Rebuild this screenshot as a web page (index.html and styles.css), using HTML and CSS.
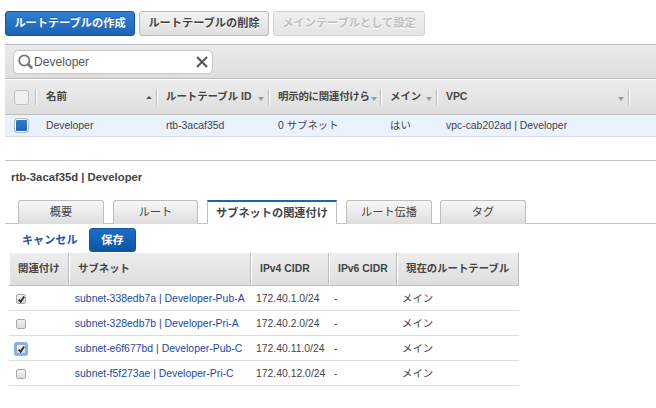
FILE: index.html
```html
<!DOCTYPE html>
<html lang="ja">
<head>
<meta charset="utf-8">
<title>ルートテーブル</title>
<link rel="stylesheet" href="styles.css">
</head>
<body>
<div class="toolbar">
  <button class="btn primary">ルートテーブルの作成</button>
  <button class="btn">ルートテーブルの削除</button>
  <button class="btn disabled wide" disabled>メインテーブルとして設定</button>
</div>
<div class="filter">
  <div class="search">
    <svg class="glass" width="16" height="16" viewBox="0 0 16 16"><circle cx="6.3" cy="6.5" r="5.1" fill="none" stroke="#777" stroke-width="1.8"/><path d="M10.4 10.6L13.4 13.6" stroke="#777" stroke-width="2.8" stroke-linecap="round"/></svg>
    <span class="query">Developer</span>
    <svg class="clear" width="12" height="12" viewBox="0 0 12 12"><path d="M1 1L11 11M11 1L1 11" stroke="#555" stroke-width="2"/></svg>
  </div>
</div>
<div class="grid head">
  <div class="pick"><span class="box"></span></div>
  <div class="col"><span>名前</span><i class="up"></i></div>
  <div class="col"><span>ルートテーブル ID</span><i class="down"></i></div>
  <div class="col tight"><span>明示的に関連付けら</span><i class="down"></i></div>
  <div class="col"><span>メイン</span><i class="down"></i></div>
  <div class="col"><span>VPC</span><i class="down"></i></div>
</div>
<div class="grid record">
  <div class="pick"><span class="box on"></span></div>
  <div class="col">Developer</div>
  <div class="col">rtb-3acaf35d</div>
  <div class="col">0 サブネット</div>
  <div class="col">はい</div>
  <div class="col">vpc-cab202ad | Developer</div>
</div>
<h1 class="title">rtb-3acaf35d | Developer</h1>
<div class="tabs">
  <div class="tab">概要</div>
  <div class="tab t2">ルート</div>
  <div class="tab active">サブネットの関連付け</div>
  <div class="tab t4">ルート伝播</div>
  <div class="tab">タグ</div>
</div>
<div class="actions">
  <a class="cancel">キャンセル</a>
  <button class="btn primary save">保存</button>
</div>
<table class="subnets">
  <colgroup><col class="c1"><col class="c2"><col class="c3"><col class="c4"><col class="c5"></colgroup>
  <thead>
    <tr><th>関連付け</th><th>サブネット</th><th>IPv4 CIDR</th><th>IPv6 CIDR</th><th>現在のルートテーブル</th></tr>
  </thead>
  <tbody>
    <tr><td><span class="check"><svg width="9" height="9" viewBox="0 0 9 9"><path d="M1.7 4.6L3.6 6.7L7.1 1.6" fill="none" stroke="#333" stroke-width="1.9"/></svg></span></td><td><a>subnet-338edb7a | Developer-Pub-A</a></td><td>172.40.1.0/24</td><td>-</td><td>メイン</td></tr>
    <tr><td><span class="check"></span></td><td><a>subnet-328edb7b | Developer-Pri-A</a></td><td>172.40.2.0/24</td><td>-</td><td>メイン</td></tr>
    <tr><td><span class="check focus"><svg width="9" height="9" viewBox="0 0 9 9"><path d="M1.7 4.6L3.6 6.7L7.1 1.6" fill="none" stroke="#333" stroke-width="1.9"/></svg></span></td><td><a>subnet-e6f677bd | Developer-Pub-C</a></td><td>172.40.11.0/24</td><td>-</td><td>メイン</td></tr>
    <tr><td><span class="check"></span></td><td><a>subnet-f5f273ae | Developer-Pri-C</a></td><td>172.40.12.0/24</td><td>-</td><td>メイン</td></tr>
  </tbody>
</table>
</body>
</html>
```
FILE: styles.css
```css
* { box-sizing: border-box; }
body {
  margin: 0;
  padding: 11px 0 0 5px;
  height: 408px;
  overflow: hidden;
  background: #fff;
  color: #444;
  font: 10.4px/14px "Liberation Sans", "Noto Sans CJK JP", sans-serif;
}
.toolbar { display: flex; gap: 4px; height: 33px; }
.btn {
  width: 130px;
  height: 25px;
  padding: 0 0 1px;
  border: 1px solid #bbb;
  border-radius: 3px;
  background: linear-gradient(#f4f4f4, #dedede);
  color: #444;
  font: bold 11.2px/20px "Liberation Sans", "Noto Sans CJK JP", sans-serif;
  white-space: nowrap;
  text-shadow: 0 1px 0 #fff;
}
.wide { width: 152px; }
.disabled { border-color: #d3d3d3; background: linear-gradient(#f0f0f0, #e4e4e4); color: #bebebe; }
.primary {
  border-color: #1256a0;
  background: linear-gradient(#3080d4, #1b63b4);
  color: #fff;
  text-shadow: 0 -1px 0 #1a5ba6;
}
.filter {
  height: 35px;
  padding: 5px 8px;
  border-top: 1px solid #bebebe;
  border-bottom: 1px solid #bebebe;
  background: linear-gradient(#ebebeb, #dedede);
}
.search {
  display: flex;
  align-items: center;
  width: 200px;
  height: 24px;
  padding: 0 4px 0 4px;
  border: 1px solid #c6c6c6;
  border-radius: 5px;
  background: #fff;
}
.query { font-size: 12.1px; color: #555; }
.clear { margin-left: auto; }
.grid { display: grid; grid-template-columns: 31px 121px 112px 112px 56px 192px 1fr; align-items: center; white-space: nowrap; }
.head {
  height: 36px;
  border-top: 1px solid #fff;
  border-bottom: 1px solid #bebebe;
  background: linear-gradient(#ececec, #dedede);
  font-weight: bold;
}
.record { height: 22px; border-bottom: 1px solid #d8dde3; background: #e9f2fe; }
.col { display: flex; align-items: center; padding-left: 9px; }
.col:nth-child(2) { padding-left: 10px; }
.head .col, .head .pick { height: 16px; border-right: 1px solid #bbb; box-shadow: 1px 0 #fff; }
.head .col { padding-right: 4px; }
.head .tight { padding-right: 3px; letter-spacing: -0.2px; }
.pick { display: flex; align-items: center; padding-left: 9px; }
.box { width: 15px; height: 15px; border: 1px solid #c2c2c2; border-radius: 3px; background: #f0f0f0; }
.box.on { border-color: #bbb; background: linear-gradient(#327fd0, #1b65b6); box-shadow: inset 0 0 0 1px #fff; }
i { margin-left: auto; border: 3px solid transparent; }
.up { border-top: 0; border-bottom-color: #555; }
.down { margin-top: 3px; border-bottom: 0; border-top: 4px solid #999; }
.title {
  height: 40px;
  margin: 23px 0 0;
  padding: 9px 6px;
  border-top: 1px solid #c6c6c6;
  font-size: 11.3px;
  line-height: 14px;
}
.tabs { display: flex; height: 24px; padding-left: 13px; background: linear-gradient(#c6c6c6, #c6c6c6) bottom / 100% 1px no-repeat; }
.tab {
  width: 86px;
  margin-right: 9px;
  border: 1px solid #bebebe;
  border-bottom: 0;
  border-radius: 3px 3px 0 0;
  background: linear-gradient(#f7f7f7, #dedede);
  font-size: 11.2px;
  line-height: 22px;
  text-align: center;
  white-space: nowrap;
}
.t2 { width: 85px; }
.active { width: 130px; border-top: 2px solid #1b63b4; border-radius: 0; background: #fff; font-weight: bold; }
.t4 { margin-right: 8px; }
.actions { display: flex; height: 29px; padding: 4px 0 0 17px; }
.cancel { width: 67px; font: bold 11.1px/24px "Liberation Sans", "Noto Sans CJK JP", sans-serif; color: #1a53ad; }
.save { width: 47px; height: 24px; background: linear-gradient(#1b6fc9, #0b55a5); }
.subnets { width: 510px; margin-left: 4px; border-collapse: separate; border-spacing: 0; table-layout: fixed; }
.c1 { width: 60px; }
.c2 { width: 182px; }
.c3 { width: 78px; }
.c4 { width: 68px; }
.c5 { width: 122px; }
th, td { white-space: nowrap; text-align: left; }
th {
  height: 33px;
  padding: 0 0 0 9px;
  border-right: 1px solid #bebebe;
  border-bottom: 1px solid #bebebe;
  background: linear-gradient(#ededed, #dedede);
  box-shadow: inset 1px 0 #fff;
}
td { height: 25px; padding: 1px 0 0 5px; border-bottom: 1px solid #ddd; }
td a { margin-left: 0.8px; color: #1a47a5; font-size: 10.45px; }
.check {
  display: block;
  width: 8px;
  height: 8px;
  outline: 1px solid #aaa;
  border-radius: 1px;
  margin-left: 8px;
  background: linear-gradient(#f2f2f2, #dcdcdc);
}
td:first-child { padding-left: 0; }
.check svg { display: block; }
.focus { box-shadow: 0 0 0 3px #7db5f3; }
```
